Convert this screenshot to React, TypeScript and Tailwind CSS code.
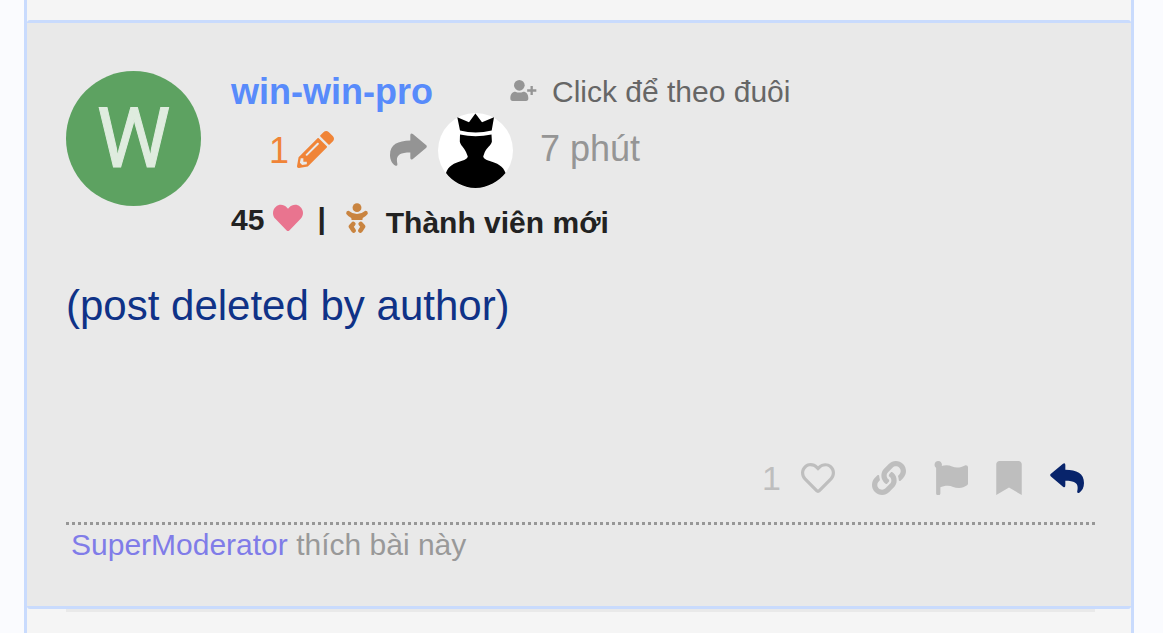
import { FaBookmark, FaFlag, FaHeart, FaLink, FaPencilAlt, FaRegHeart } from "react-icons/fa";

type IconProps = { className?: string };

const replyPath =
  "M2 33 L39 2 Q46 -2 46 6 V20 C80 21 102 30 102 60 C102 74 96 84 88 89 Q80 92 82 83 C86 62 78 53 46 53 V67 Q46 76 39 71 L2 40 Q-1 36 2 33 Z";

function ReplyIcon({ className }: IconProps) {
  return (
    <svg viewBox="0 0 102 90" fill="currentColor" className={className} aria-hidden="true">
      <path d={replyPath} />
    </svg>
  );
}

function ShareIcon({ className }: IconProps) {
  return (
    <svg viewBox="0 0 102 90" fill="currentColor" className={className} aria-hidden="true">
      <path d={replyPath} transform="translate(102 0) scale(-1 1)" />
    </svg>
  );
}

function FollowIcon({ className }: IconProps) {
  return (
    <svg viewBox="0 0 79 63" fill="currentColor" className={className} aria-hidden="true">
      <circle cx="27" cy="16" r="16" />
      <path d="M0 55 C0 42 6 35 15 35 Q27 40 39 35 C48 35 54 42 54 55 Q54 63 47 63 H7 Q0 63 0 55 Z" />
      <path d="M60.5 18 h7 v10 h10.5 v7 h-10.5 v10 h-7 v-10 h-10 v-7 h10 Z" />
    </svg>
  );
}

function BabyIcon({ className }: IconProps) {
  return (
    <svg viewBox="0 0 67 90" fill="currentColor" className={className} aria-hidden="true">
      <circle cx="33.5" cy="13.5" r="13.5" />
      <path d="M1 33 Q-1 23 8 23 Q20 33 33.5 33 Q47 33 59 23 Q68 23 66 33 Q60 41 51 45 L50 51 H17 L16 45 Q7 41 1 33 Z" />
      <path
        d="M22 63 L15 71 L23 83 M45 63 L52 71 L44 83"
        fill="none"
        stroke="currentColor"
        strokeWidth="14"
        strokeLinecap="round"
        strokeLinejoin="round"
      />
    </svg>
  );
}

function RoyalAvatar() {
  return (
    <svg viewBox="0 0 75 75" className="size-[75px] shrink-0" aria-hidden="true">
      <circle cx="37.5" cy="37.5" r="37.5" fill="#fff" />
      <path d="M19.3 4.3 L31 9.2 L37.4 0.4 L44 9.2 L56 4.3 L53.7 17.4 Q37.5 21.4 22 17.4 Z" />
      <path d="M22 21.4 Q37.5 25 53.5 21.4 L53.9 28.5 C53 32.5 49 34.5 46.8 39 L45.2 43.6 Q46 46.6 51 47.8 C59 50 65.5 53.5 67.5 60 C61 68 50 75 37.5 75 S14 68 8 60 C10 53.5 16 50 24 47.8 Q29 46.6 29.8 43.6 L28 39 C26 34.5 22.6 32.5 21.8 28.5 Z" />
    </svg>
  );
}

function PostHeader() {
  return (
    <header className="flex gap-[30px]">
      <a
        href="#user"
        aria-label="win-win-pro"
        className="flex size-[135px] shrink-0 items-center justify-center rounded-full bg-[#5da261] pt-[2px] font-[Roboto,sans-serif] text-[83px] font-normal text-[#dfecdf] [-webkit-text-stroke:1px_#dfecdf]"
      >
        W
      </a>
      <div>
        <div className="flex h-[42px] items-center">
          <a href="#user" className="text-4xl font-bold text-[#588bfb]">
            win-win-pro
          </a>
          <button
            type="button"
            className="ml-[77px] flex items-center gap-[15px] pb-[2px] text-[30px] text-[#666]"
          >
            <FollowIcon className="mb-[2px] h-[21px] w-[27px] text-[#959595]" />
            Click để theo đuôi
          </button>
        </div>
        <div className="flex h-[75px] items-center pl-[38px] text-4xl">
          <button type="button" className="flex items-center gap-2 text-[#f08437]">
            1
            <FaPencilAlt className="mb-[2px] size-[37px]" />
          </button>
          <a href="#reply-to" className="ml-14 flex items-center gap-[11px]">
            <ShareIcon className="mb-[2px] h-[33px] w-[37px] text-[#949494]" />
            <RoyalAvatar />
          </a>
          <a href="#date" className="ml-[27px] pb-1 text-[#959595]">
            7 phút
          </a>
        </div>
        <div className="mt-3 flex h-10 items-center text-[30px] font-bold text-[#222]">
          <div className="flex items-center gap-[9px] pb-[2px]">
            45
            <FaHeart className="mb-[2px] size-[30px] text-[#e9748f]" />
          </div>
          <span className="ml-[14px] pb-1">|</span>
          <BabyIcon className="mb-1 ml-5 h-[30px] w-[22px] text-[#c98440]" />
          <span className="ml-[18px] pt-1">Thành viên mới</span>
        </div>
      </div>
    </header>
  );
}

function PostActions() {
  return (
    <div className="mt-[125px] flex h-[34px] items-center justify-end gap-7 pr-[11px] text-[34px] text-[#bebebe]">
      <div className="mr-[9px] flex items-center gap-5">
        <button type="button">1</button>
        <button type="button" aria-label="Like">
          <FaRegHeart />
        </button>
      </div>
      <button type="button" aria-label="Link">
        <FaLink />
      </button>
      <button type="button" aria-label="Flag">
        <FaFlag />
      </button>
      <button type="button" aria-label="Bookmark">
        <FaBookmark className="w-[26px]" />
      </button>
      <button type="button" aria-label="Reply" className="text-[#08246b]">
        <ReplyIcon className="h-[30px] w-[34px]" />
      </button>
    </div>
  );
}

export default function App() {
  return (
    <div className="min-h-screen bg-white pr-[7px] font-['Liberation_Sans',Arial,sans-serif]">
      <div className="flex min-h-screen bg-[#fafbfe] pr-[29px] pl-6">
        <main className="grow border-x-3 border-[#c9dbfd] bg-[#f5f5f5] pt-5">
          <article className="rounded-[3px] border-y-3 border-[#c9dbfd] bg-[#e9e9e9] pt-12 pr-9 pb-[41px] pl-[39px]">
            <PostHeader />
            <p className="mt-9 text-[42px] leading-[60px] text-[#0f3287]">(post deleted by author)</p>
            <PostActions />
            <footer className="mt-[27px] border-t-3 border-dotted border-[#979797] pl-[5px] text-[30px] leading-10 text-[#999]">
              <a href="#supermoderator" className="text-[#807ce8]">
                SuperModerator
              </a>{" "}
              thích bài này
            </footer>
          </article>
          <div className="mr-9 ml-[39px] border-t-3 border-[#e9e9e9]" />
        </main>
      </div>
    </div>
  );
}
